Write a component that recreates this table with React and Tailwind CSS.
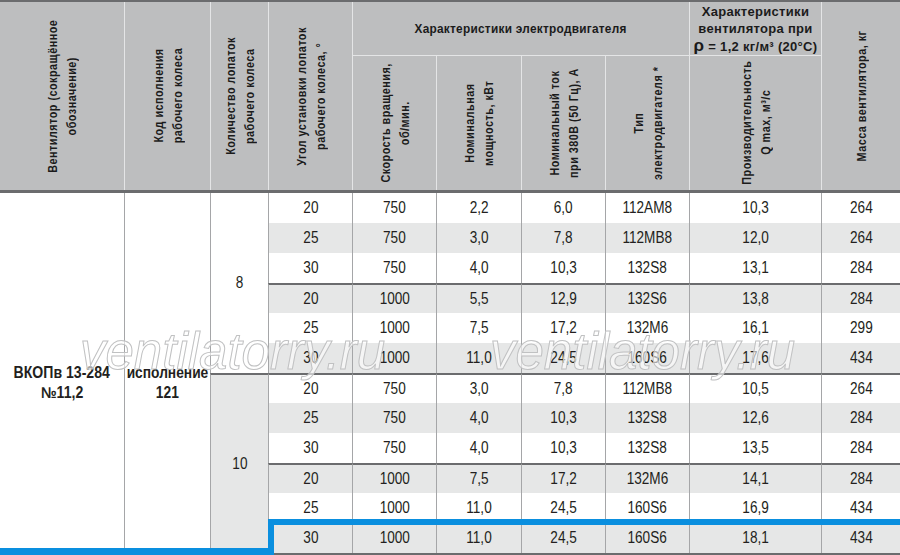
import React from 'react';

// column widths taken from the table rulings
const COLS = 'grid-cols-[124px_86px_58px_84px_84px_85px_84px_84px_132px_79px]';

const ROWS = [
  ['20', '750', '2,2', '6,0', '112AM8', '10,3', '264'],
  ['25', '750', '3,0', '7,8', '112MB8', '12,0', '264'],
  ['30', '750', '4,0', '10,3', '132S8', '13,1', '284'],
  ['20', '1000', '5,5', '12,9', '132S6', '13,8', '284'],
  ['25', '1000', '7,5', '17,2', '132M6', '16,1', '299'],
  ['30', '1000', '11,0', '24,5', '160S6', '17,6', '434'],
  ['20', '750', '3,0', '7,8', '112MB8', '10,5', '264'],
  ['25', '750', '4,0', '10,3', '132S8', '12,6', '284'],
  ['30', '750', '4,0', '10,3', '132S8', '13,5', '284'],
  ['20', '1000', '7,5', '17,2', '132M6', '14,1', '284'],
  ['25', '1000', '11,0', '24,5', '160S6', '16,9', '434'],
  ['30', '1000', '11,0', '24,5', '160S6', '18,1', '434'],
];

// no narrow face installed, so squeeze the regular one
function Narrow({ className = 'scale-x-[0.85]', children }) {
  return <span className={`inline-block whitespace-nowrap ${className}`}>{children}</span>;
}

function Rot({ children }) {
  return (
    <div className="[writing-mode:vertical-rl] rotate-180 scale-y-[0.83] whitespace-nowrap text-center leading-[19px] tracking-[0.6px]">
      {children}
    </div>
  );
}

function HeadCell({ className = '', children }) {
  return (
    <div className={`flex items-center justify-center border-l border-[#e4e5e6] ${className}`}>
      {children}
    </div>
  );
}

function Header() {
  return (
    <div
      className={`grid ${COLS} grid-rows-[54px_134px] border-t-2 border-b-[3px] border-[#6b6c6e] bg-[#bdbebf] text-[13px] font-bold text-[#1b1b1b]`}
    >
      <HeadCell className="row-span-2 border-l-0">
        <Rot>Вентилятор (сокращённое<br />обозначение)</Rot>
      </HeadCell>
      <HeadCell className="row-span-2">
        <Rot>Код исполнения<br />рабочего колеса</Rot>
      </HeadCell>
      <HeadCell className="row-span-2">
        <Rot>Количество лопаток<br />рабочего колеса</Rot>
      </HeadCell>
      <HeadCell className="row-span-2">
        <Rot>Угол установки лопаток<br />рабочего колеса, °</Rot>
      </HeadCell>
      <HeadCell className="col-span-4 border-b border-b-[#e4e5e6] tracking-[0.3px]">
        <Narrow className="scale-x-[0.91]">Характеристики электродвигателя</Narrow>
      </HeadCell>
      <HeadCell className="border-b border-b-[#e4e5e6] text-center leading-[17px] tracking-[0.3px]">
        <div>
          Характеристики<br />вентилятора при<br />
          <span className="text-[17px]">ρ</span> = 1,2 кг/м³ (20°C)
        </div>
      </HeadCell>
      <HeadCell className="row-span-2">
        <Rot>Масса вентилятора, кг</Rot>
      </HeadCell>
      <HeadCell>
        <Rot>Скорость вращения,<br />об/мин.</Rot>
      </HeadCell>
      <HeadCell>
        <Rot>Номинальная<br />мощность, кВт</Rot>
      </HeadCell>
      <HeadCell>
        <Rot>Номинальный ток<br />при 380В (50 Гц), А</Rot>
      </HeadCell>
      <HeadCell>
        <Rot>Тип<br />электродвигателя *</Rot>
      </HeadCell>
      <HeadCell>
        <Rot>Производительность<br />Q max, м³/с</Rot>
      </HeadCell>
    </div>
  );
}

function DataRow({ row, index }) {
  const striped = index % 2 === 1;
  const groupTop = index % 3 === 0 && index > 0;
  return row.map((value, i) => (
    <div
      key={i}
      className={`flex items-center justify-center border-l border-[#a5a6a8] ${
        striped ? 'bg-[#e6e7e7]' : 'bg-white'
      } ${groupTop ? 'border-t-2 border-t-[#6b6c6e]' : ''}`}
    >
      <Narrow>{value}</Narrow>
    </div>
  ));
}

export default function App() {
  return (
    <div className="relative h-[555px] w-[900px] overflow-hidden bg-white font-['Liberation_Sans',Arial,sans-serif] text-[#231f20]">
      <Header />

      <div className={`grid ${COLS} grid-rows-[repeat(12,30px)] border-b-2 border-[#6b6c6e] text-[16px]`}>
        <div className="row-span-12 flex flex-col items-center justify-center pt-[20px] text-center font-bold leading-[20px]">
          <Narrow className="scale-x-[0.88]">ВКОПв 13-284</Narrow>
          <Narrow className="scale-x-[0.88]">№11,2</Narrow>
        </div>
        <div className="row-span-12 flex flex-col items-center justify-center border-l border-[#a5a6a8] pt-[20px] text-center font-bold leading-[20px]">
          <Narrow className="scale-x-[0.86]">исполнение</Narrow>
          <Narrow className="scale-x-[0.86]">121</Narrow>
        </div>
        <div className="row-span-6 flex items-center justify-center border-l border-[#a5a6a8] bg-white">
          <Narrow>8</Narrow>
        </div>
        {ROWS.slice(0, 6).map((row, i) => (
          <DataRow key={i} row={row} index={i} />
        ))}
        <div className="row-span-6 flex items-center justify-center border-l border-t-2 border-[#a5a6a8] border-t-[#6b6c6e] bg-[#e6e7e7]">
          <Narrow>10</Narrow>
        </div>
        {ROWS.slice(6).map((row, i) => (
          <DataRow key={i + 6} row={row} index={i + 6} />
        ))}
      </div>

      {/* watermark */}
      <div className="pointer-events-none absolute left-[80px] top-[326px] text-[51px] italic leading-none text-white/60 font-['Liberation_Sans',sans-serif] [-webkit-text-stroke:1px_#c0c1c2]">
        ventilatorry.ru
      </div>
      <div className="pointer-events-none absolute left-[490px] top-[326px] text-[51px] italic leading-none text-white/60 font-['Liberation_Sans',sans-serif] [-webkit-text-stroke:1px_#c0c1c2]">
        ventilatorry.ru
      </div>

      {/* selection outline */}
      <div className="absolute left-[268px] right-0 top-[519px] h-[6px] bg-[#0a8fdf]" />
      <div className="absolute bottom-0 left-[268px] top-[519px] w-[6px] bg-[#0a8fdf]" />
      <div className="absolute bottom-0 left-0 top-[548px] w-[274px] bg-[#0a8fdf]" />
    </div>
  );
}
